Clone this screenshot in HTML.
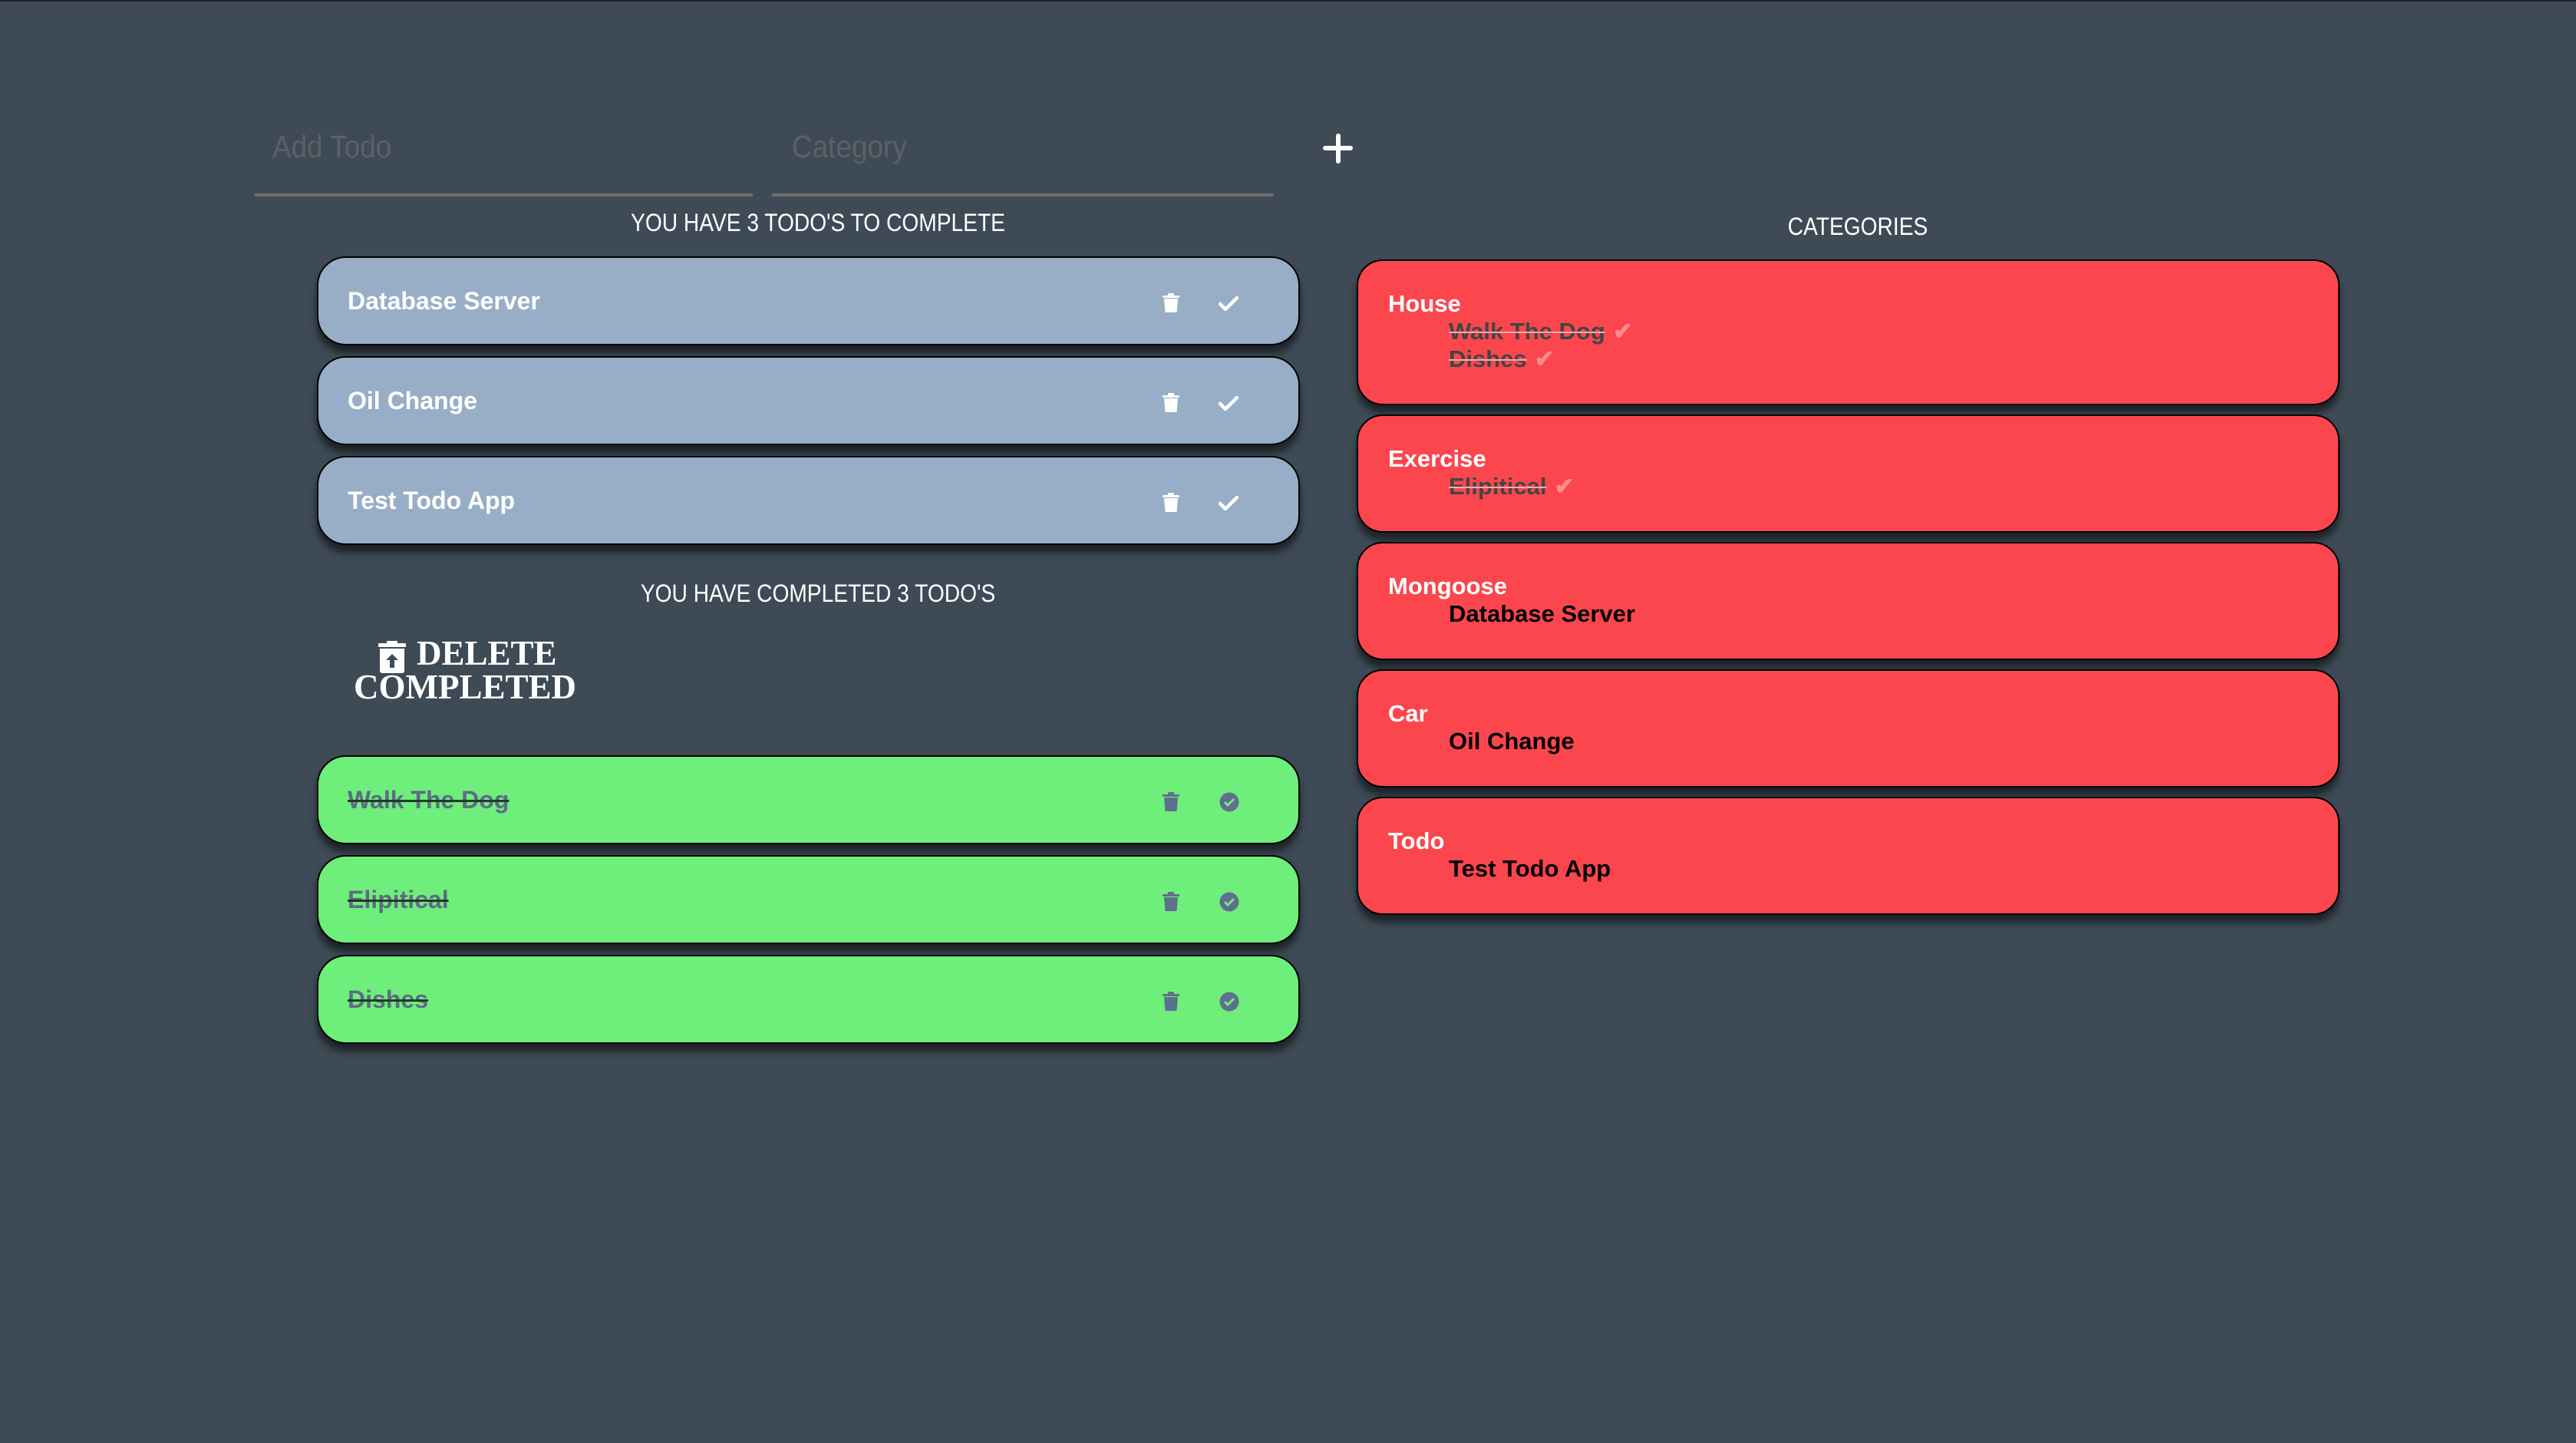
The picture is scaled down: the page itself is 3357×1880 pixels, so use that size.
<!DOCTYPE html>
<html><head><meta charset="utf-8"><style>
html,body{margin:0;padding:0}
body{width:3357px;height:1880px;background:#3e4b56;position:relative;overflow:hidden;font-family:"Liberation Sans",sans-serif;border-top:2px solid #222;box-sizing:border-box}
.a{position:absolute}
.ph{color:#5c6066;font-size:41px;transform:scaleX(.9);transform-origin:left}
.ul{height:4px;background:#6e6e6e}
.hd{color:#fff;font-size:32px;text-align:center;width:800px;transform:scaleX(.88)}
.card{position:absolute;left:413px;width:1277px;height:112px;border:2px solid #000;border-radius:38px;box-shadow:0 10px 10px rgba(0,0,0,.55)}
.blue{background:#97aec6}
.green{background:#6eee7b}
.card .t{position:absolute;left:38px;top:0;line-height:112px;font-size:32px;font-weight:bold;color:#fff}
.green .t{color:#5f6b85;text-decoration:line-through;text-decoration-color:#1f3a28;text-decoration-thickness:3px}
.card svg{position:absolute}
.red{position:absolute;left:1768px;width:1277px;border:2px solid #000;border-radius:34px;background:#fb464e;box-shadow:0 10px 10px rgba(0,0,0,.55)}
.red .ti{position:absolute;left:39px;font-size:31px;font-weight:bold;color:#fff}
.red .it{position:absolute;left:118px;font-size:31px;font-weight:bold;color:#000;white-space:nowrap}
.red .it.d{color:#444;text-decoration:line-through;text-decoration-color:#f0b0b0;text-decoration-thickness:2px}
.red .ck{color:#ff8c8c;text-decoration:none;display:inline-block;margin-left:10px}
</style></head><body>
<div class="a ph" style="left:355px;top:166px">Add Todo</div>
<div class="a ul" style="left:332px;top:250px;width:649px"></div>
<div class="a ph" style="left:1032px;top:166px">Category</div>
<div class="a ul" style="left:1006px;top:250px;width:653px"></div>
<div class="a" style="left:1741px;top:172px;width:6px;height:39px;background:#fff;border-radius:3px"></div>
<div class="a" style="left:1724px;top:188px;width:39px;height:6px;background:#fff;border-radius:3px"></div>

<div class="a hd" style="left:666px;top:270px">YOU HAVE 3 TODO'S TO COMPLETE</div>

<div class="card blue" style="top:332px"><div class="t">Database Server</div>
<svg style="left:1100px;top:46px" width="22" height="26" viewBox="0 0 22 26"><rect x="0" y="3" width="22" height="3" rx="1" fill="#fff"/><rect x="7" y="0" width="8" height="4" rx="1" fill="#fff"/><path d="M2 7h18l-1.5 18h-15z" fill="#fff"/></svg>
<svg style="left:1173px;top:50px" width="26" height="19" viewBox="0 0 26 19"><path d="M2 10l7 7L24 2" stroke="#fff" stroke-width="4.5" fill="none" stroke-linecap="round"/></svg></div>
<div class="card blue" style="top:462px"><div class="t">Oil Change</div>
<svg style="left:1100px;top:46px" width="22" height="26" viewBox="0 0 22 26"><rect x="0" y="3" width="22" height="3" rx="1" fill="#fff"/><rect x="7" y="0" width="8" height="4" rx="1" fill="#fff"/><path d="M2 7h18l-1.5 18h-15z" fill="#fff"/></svg>
<svg style="left:1173px;top:50px" width="26" height="19" viewBox="0 0 26 19"><path d="M2 10l7 7L24 2" stroke="#fff" stroke-width="4.5" fill="none" stroke-linecap="round"/></svg></div>
<div class="card blue" style="top:592px"><div class="t">Test Todo App</div>
<svg style="left:1100px;top:46px" width="22" height="26" viewBox="0 0 22 26"><rect x="0" y="3" width="22" height="3" rx="1" fill="#fff"/><rect x="7" y="0" width="8" height="4" rx="1" fill="#fff"/><path d="M2 7h18l-1.5 18h-15z" fill="#fff"/></svg>
<svg style="left:1173px;top:50px" width="26" height="19" viewBox="0 0 26 19"><path d="M2 10l7 7L24 2" stroke="#fff" stroke-width="4.5" fill="none" stroke-linecap="round"/></svg></div>

<div class="a hd" style="left:666px;top:753px">YOU HAVE COMPLETED 3 TODO'S</div>

<svg class="a" style="left:493px;top:833px" width="36" height="42" viewBox="0 0 36 42"><rect x="0" y="3" width="36" height="5" rx="1" fill="#fff"/><rect x="11" y="0" width="14" height="5" rx="1" fill="#fff"/><path d="M2 10h32v29a3 3 0 0 1-3 3H5a3 3 0 0 1-3-3z" fill="#fff"/><path d="M18 17l-8 8h5v10h6V25h5z" fill="#3e4b56"/></svg>
<div class="a" style="left:543px;top:828px;font-family:'Liberation Serif',serif;font-weight:bold;color:#fff;font-size:45px;line-height:42px">DELETE</div>
<div class="a" style="left:461px;top:872px;font-family:'Liberation Serif',serif;font-weight:bold;color:#fff;font-size:45px;line-height:42px">COMPLETED</div>

<div class="card green" style="top:982px"><div class="t">Walk The Dog</div>
<svg style="left:1100px;top:46px" width="22" height="26" viewBox="0 0 22 26"><rect x="0" y="3" width="22" height="3" rx="1" fill="#5f6f8c"/><rect x="7" y="0" width="8" height="4" rx="1" fill="#5f6f8c"/><path d="M2 7h18l-1.5 18h-15z" fill="#5f6f8c"/></svg>
<svg style="left:1174px;top:46px" width="26" height="26" viewBox="0 0 26 26"><circle cx="13" cy="13" r="12.5" fill="#5f6f8c"/><path d="M7 13l4 4 8-8" stroke="#6eee7b" stroke-width="3" fill="none"/></svg></div>
<div class="card green" style="top:1112px"><div class="t">Elipitical</div>
<svg style="left:1100px;top:46px" width="22" height="26" viewBox="0 0 22 26"><rect x="0" y="3" width="22" height="3" rx="1" fill="#5f6f8c"/><rect x="7" y="0" width="8" height="4" rx="1" fill="#5f6f8c"/><path d="M2 7h18l-1.5 18h-15z" fill="#5f6f8c"/></svg>
<svg style="left:1174px;top:46px" width="26" height="26" viewBox="0 0 26 26"><circle cx="13" cy="13" r="12.5" fill="#5f6f8c"/><path d="M7 13l4 4 8-8" stroke="#6eee7b" stroke-width="3" fill="none"/></svg></div>
<div class="card green" style="top:1242px"><div class="t">Dishes</div>
<svg style="left:1100px;top:46px" width="22" height="26" viewBox="0 0 22 26"><rect x="0" y="3" width="22" height="3" rx="1" fill="#5f6f8c"/><rect x="7" y="0" width="8" height="4" rx="1" fill="#5f6f8c"/><path d="M2 7h18l-1.5 18h-15z" fill="#5f6f8c"/></svg>
<svg style="left:1174px;top:46px" width="26" height="26" viewBox="0 0 26 26"><circle cx="13" cy="13" r="12.5" fill="#5f6f8c"/><path d="M7 13l4 4 8-8" stroke="#6eee7b" stroke-width="3" fill="none"/></svg></div>

<div class="a hd" style="left:2021px;top:275px">CATEGORIES</div>

<div class="red" style="top:336px;height:186px"><div class="ti" style="top:38px">House</div>
<div class="it d" style="top:74px">Walk The Dog<span class="ck">✔</span></div>
<div class="it d" style="top:110px">Dishes<span class="ck">✔</span></div></div>
<div class="red" style="top:538px;height:150px"><div class="ti" style="top:38px">Exercise</div>
<div class="it d" style="top:74px">Elipitical<span class="ck">✔</span></div></div>
<div class="red" style="top:704px;height:150px"><div class="ti" style="top:38px">Mongoose</div>
<div class="it" style="top:74px">Database Server</div></div>
<div class="red" style="top:870px;height:150px"><div class="ti" style="top:38px">Car</div>
<div class="it" style="top:74px">Oil Change</div></div>
<div class="red" style="top:1036px;height:150px"><div class="ti" style="top:38px">Todo</div>
<div class="it" style="top:74px">Test Todo App</div></div>
</body></html>
